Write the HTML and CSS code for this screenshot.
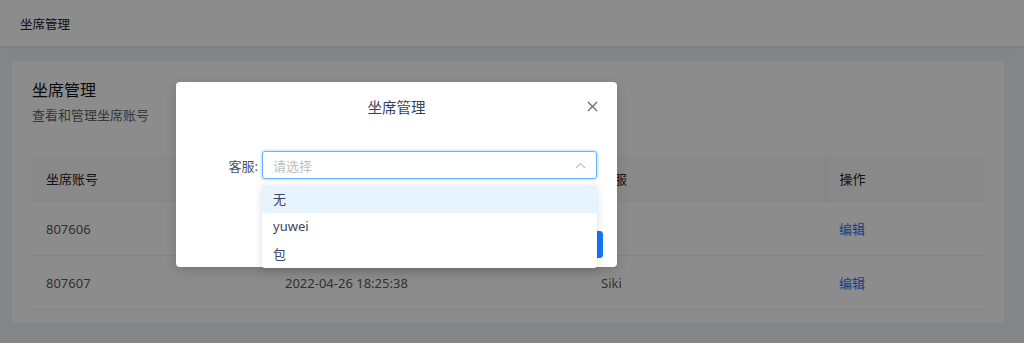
FILE: index.html
```html
<!DOCTYPE html>
<html lang="zh">
<head>
<meta charset="utf-8">
<link rel="stylesheet" href="styles.css">
</head>
<body>
<header class="topbar">坐席管理</header>
<main class="main">
  <section class="card">
    <h1 class="card-title">坐席管理</h1>
    <p class="card-sub">查看和管理坐席账号</p>
    <table class="table">
      <colgroup><col class="c1"><col class="c2"><col class="c3"><col class="c4"></colgroup>
      <thead>
        <tr><th>坐席账号</th><th>创建时间</th><th>客服</th><th class="last">操作</th></tr>
      </thead>
      <tbody>
        <tr><td>807606</td><td>2022-04-26 18:25:38</td><td></td><td><a class="link">编辑</a></td></tr>
        <tr><td>807607</td><td>2022-04-26 18:25:38</td><td>Siki</td><td><a class="link">编辑</a></td></tr>
      </tbody>
    </table>
  </section>
</main>
<div class="mask"></div>
<div class="modal">
  <div class="modal-head">
    <span class="modal-title">坐席管理</span>
    <svg class="close" width="11" height="11" viewBox="0 0 11 11"><path d="M1 1L10 10M10 1L1 10" stroke="#6b7080" stroke-width="1.4" fill="none"/></svg>
  </div>
  <div class="form-row">
    <label class="label">客服:</label>
    <div class="select">
      <span class="placeholder">请选择</span>
      <svg class="arrow" width="11" height="7" viewBox="0 0 11 7"><path d="M1 6L5.5 1.5L10 6" stroke="#c0c0c0" stroke-width="1.1" fill="none"/></svg>
    </div>
  </div>
  <div class="modal-foot">
    <button class="btn">取消</button>
    <button class="btn primary">确定</button>
  </div>
</div>
<ul class="dropdown">
  <li class="opt active">无</li>
  <li class="opt">yuwei</li>
  <li class="opt">包</li>
</ul>
</body>
</html>
```
FILE: styles.css
```css
html, body {
  margin: 0;
  padding: 0;
}
body {
  width: 1024px;
  height: 343px;
  overflow: hidden;
  background: #f0f2f5;
  font-family: "Noto Sans", "Noto Sans CJK SC", sans-serif;
  font-size: 13px;
  color: rgba(0, 0, 0, 0.85);
  position: relative;
}
.topbar {
  height: 46px;
  box-sizing: border-box;
  background: #fff;
  padding-left: 20px;
  display: flex;
  align-items: center;
  font-size: 12.5px;
  color: #222;
  box-shadow: 0 1px 3px rgba(0, 0, 0, 0.08);
}
.main {
  padding: 15px 20px 20px 12px;
}
.card {
  background: #fff;
  padding: 18px 20px 15px 20px;
  height: 262px;
  box-sizing: border-box;
}
.card-title {
  margin: 0;
  font-size: 16px;
  font-weight: 400;
  line-height: 22px;
  color: #141414;
}
.card-sub {
  margin: 5px 0 0;
  font-size: 13px;
  line-height: 18px;
  color: #666;
}
.table {
  margin-top: 32px;
  width: 952px;
  border-collapse: collapse;
  table-layout: fixed;
}
.c1 { width: 239px; }
.c2 { width: 316px; }
.c3 { width: 238px; }
.c4 { width: 159px; }
.table th {
  background: #fafafa;
  text-align: left;
  font-weight: 400;
  height: 45px;
  padding: 0 14px;
  color: #1f1f1f;
  border-bottom: 1px solid #f0f0f0;
}
.table th.last {
  border-left: 1px solid #ededed;
}
.table td {
  height: 53px;
  padding: 0 14px;
  color: #595959;
  border-bottom: 1px solid #f0f0f0;
}
.link {
  color: #1677ff;
}
.mask {
  position: absolute;
  inset: 0;
  background: rgba(0, 0, 0, 0.45);
}
.modal {
  position: absolute;
  left: 176px;
  top: 82px;
  width: 441px;
  height: 185px;
  background: #fff;
  border-radius: 4px;
  box-shadow: 0 4px 12px rgba(0, 0, 0, 0.15);
  display: flex;
  flex-direction: column;
}
.modal-head {
  height: 48px;
  display: flex;
  align-items: center;
  justify-content: center;
  position: relative;
}
.modal-title {
  font-size: 14.5px;
  color: #3a4260;
}
.close {
  position: absolute;
  right: 19px;
  top: 19px;
}
.form-row {
  margin-top: 21px;
  display: flex;
  align-items: center;
  padding-right: 20px;
}
.label {
  width: 82px;
  text-align: right;
  color: #4a5068;
}
.select {
  margin-left: 4px;
  flex: 1;
  height: 28px;
  box-sizing: border-box;
  border: 1px solid #69b1ff;
  border-radius: 3px;
  box-shadow: 0 0 0 1.5px rgba(24, 144, 255, 0.18);
  display: flex;
  align-items: center;
  justify-content: space-between;
  padding: 0 10px;
}
.placeholder {
  color: #bfbfbf;
}
.modal-foot {
  margin-top: auto;
  margin-bottom: 9px;
  display: flex;
  justify-content: flex-end;
  gap: 8px;
  padding-right: 14px;
}
.btn {
  height: 27px;
  padding: 0 15px;
  border: 1px solid #d9d9d9;
  border-radius: 3px;
  background: #fff;
  font-family: inherit;
  font-size: 13px;
}
.btn.primary {
  background: #1677ff;
  border-color: #1677ff;
  color: #fff;
}
.dropdown {
  position: absolute;
  left: 262px;
  top: 185px;
  width: 335px;
  margin: 0;
  padding: 0;
  list-style: none;
  background: #fff;
  border-radius: 3px;
  box-shadow: 0 3px 8px rgba(0, 0, 0, 0.15);
}
.opt {
  height: 27.5px;
  display: flex;
  align-items: center;
  padding-left: 11px;
  color: #3c4460;
}
.opt.active {
  background: #e6f4ff;
}
```
